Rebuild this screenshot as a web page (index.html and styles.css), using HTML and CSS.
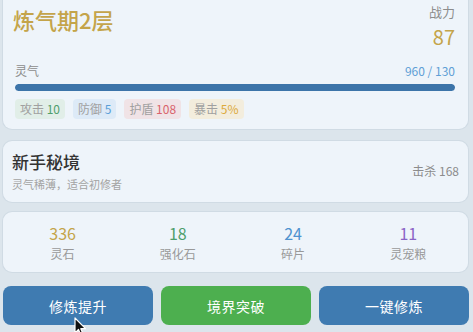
FILE: index.html
```html
<!DOCTYPE html>
<html lang="zh">
<head>
<meta charset="utf-8">
<link rel="stylesheet" href="styles.css">
</head>
<body>
<div class="page">
  <section class="card status">
    <div class="head">
      <div class="realm">炼气期2层</div>
      <div class="power">
        <div class="power-label">战力</div>
        <div class="power-value">87</div>
      </div>
    </div>
    <div class="qi-row">
      <span class="qi-label">灵气</span>
      <span class="qi-value">960 / 130</span>
    </div>
    <div class="bar"><div class="bar-fill"></div></div>
    <div class="tags">
      <span class="tag tag-atk">攻击 <b>10</b></span>
      <span class="tag tag-def">防御 <b>5</b></span>
      <span class="tag tag-shd">护盾 <b>108</b></span>
      <span class="tag tag-crt">暴击 <b>5%</b></span>
    </div>
  </section>

  <section class="card realm-card">
    <div class="rc-left">
      <div class="rc-title">新手秘境</div>
      <div class="rc-desc">灵气稀薄，适合初修者</div>
    </div>
    <div class="rc-kills">击杀 168</div>
  </section>

  <section class="card res">
    <div class="res-item"><div class="res-num gold">336</div><div class="res-label">灵石</div></div>
    <div class="res-item"><div class="res-num green">18</div><div class="res-label">强化石</div></div>
    <div class="res-item"><div class="res-num blue">24</div><div class="res-label">碎片</div></div>
    <div class="res-item"><div class="res-num purple">11</div><div class="res-label">灵宠粮</div></div>
  </section>

  <div class="actions">
    <button class="btn btn-blue">修炼提升</button>
    <button class="btn btn-green">境界突破</button>
    <button class="btn btn-blue">一键修炼</button>
  </div>
</div>
<svg class="cursor" width="14" height="20" viewBox="0 0 14 20">
  <path d="M1 1 L1 16 L4.5 12.5 L7 18.5 L9.3 17.5 L6.8 11.7 L11.5 11.7 Z" fill="#111" stroke="#fff" stroke-width="1.2" stroke-linejoin="round"/>
</svg>
</body>
</html>
```

FILE: styles.css
```css
* { box-sizing: border-box; }
html, body {
  margin: 0;
  padding: 0;
  height: 332px;
  overflow: hidden;
  background: #dce5ec;
  font-family: "Noto Sans CJK SC", "Noto Sans", sans-serif;
}
.page {
  position: relative;
  padding: 0 5px 0 3px;
}
.card {
  background: #eef4fa;
  border-radius: 9px;
  box-shadow: 0 0 0 1px rgba(200, 212, 224, 0.6);
}
.status {
  margin-top: -10px;
  padding: 12px 9px 10px 10px;
  height: 139px;
}
.head {
  display: flex;
  justify-content: space-between;
  align-items: flex-start;
}
.realm {
  font-size: 22px;
  line-height: 28px;
  font-weight: 500;
  color: #c4a44a;
  margin-top: 3px;
}
.power {
  text-align: right;
  padding-right: 4px;
}
.power-label {
  font-size: 13px;
  line-height: 18px;
  color: #8c8c8c;
  margin-top: 1px;
}
.power-value {
  font-size: 20px;
  line-height: 26px;
  color: #c4a44a;
  margin-top: 3px;
}
.qi-row {
  display: flex;
  justify-content: space-between;
  margin-top: 13px;
  padding: 0 4px 0 2px;
  font-size: 12px;
  line-height: 16px;
}
.qi-label { color: #8c8c8c; }
.qi-value { color: #5f9fd6; }
.bar {
  margin: 5px 4px 0 2px;
  height: 7px;
  background: #d6e2ee;
  border-radius: 4px;
  overflow: hidden;
}
.bar-fill {
  height: 100%;
  width: 100%;
  background: #3c74a9;
  border-radius: 4px;
}
.tags {
  display: flex;
  gap: 8px;
  margin-top: 8px;
  margin-left: 2px;
}
.tag {
  font-size: 12px;
  line-height: 20px;
  padding: 0 5px;
  border-radius: 4px;
  color: #a0a0a0;
}
.tag b { font-weight: 400; }
.tag-atk { background: #e1eee8; }
.tag-atk b { color: #4f9e6c; }
.tag-def { background: #ddeaf7; }
.tag-def b { color: #5a9fd8; }
.tag-shd { background: #f0e3e6; }
.tag-shd b { color: #d9636c; }
.tag-crt { background: #f3eddd; }
.tag-crt b { color: #dcaa3c; }

.realm-card {
  margin-top: 12px;
  height: 61px;
  display: flex;
  justify-content: space-between;
  align-items: center;
  padding: 0 9px 0 9px;
}
.rc-title {
  font-size: 17px;
  line-height: 22px;
  font-weight: 500;
  color: #333;
}
.rc-desc {
  font-size: 11px;
  line-height: 16px;
  margin-top: 3px;
  color: #a3a3a3;
}
.rc-kills {
  font-size: 12px;
  color: #8c8c8c;
  margin-top: -2px;
}

.res {
  margin-top: 10px;
  height: 60px;
  display: grid;
  grid-template-columns: repeat(4, 1fr);
  align-content: center;
  padding: 0 2px;
}
.res-item { text-align: center; }
.res-num {
  font-size: 16px;
  line-height: 20px;
}
.res-label {
  font-size: 12px;
  line-height: 16px;
  margin-top: 3px;
  color: #999;
}
.gold { color: #c4a44a; }
.green { color: #4f9e6c; }
.blue { color: #4f92cf; }
.purple { color: #8a63c6; }

.actions {
  margin-top: 14px;
  display: grid;
  grid-template-columns: repeat(3, 1fr);
  gap: 8px;
  margin-right: -1px;
}
.btn {
  height: 39px;
  border: none;
  border-radius: 8px;
  color: #fff;
  font-family: "Noto Sans CJK SC", "Noto Sans", sans-serif;
  font-size: 14px;
  letter-spacing: 0.5px;
}
.btn-blue { background: #3f7bb1; }
.btn-green { background: #4daf4f; }

.cursor {
  position: absolute;
  left: 74px;
  top: 317px;
}
```
